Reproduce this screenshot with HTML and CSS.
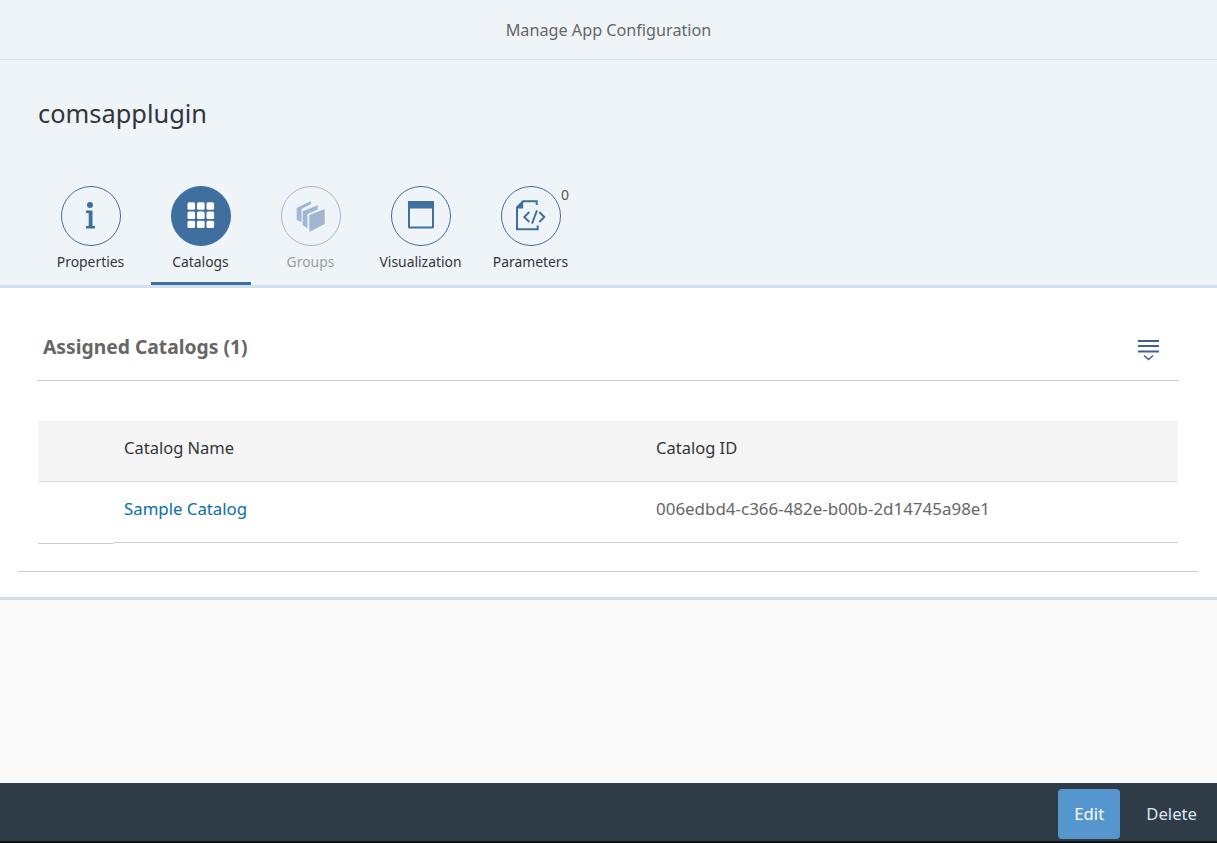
FILE: index.html
```html
<!DOCTYPE html>
<html lang="en">
<head>
<meta charset="utf-8">
<title>Manage App Configuration</title>
<link rel="stylesheet" href="styles.css">
</head>
<body>
<div class="page">
  <header class="app-header">Manage App Configuration</header>
  <section class="object-header">
    <h1 class="object-title">comsapplugin</h1>
    <nav class="tabs">
      <div class="tab">
        <span class="tab-circle">
          <svg class="icon" width="32" height="32" viewBox="0 0 32 32"><circle cx="15" cy="5" r="3" fill="#3f6f9f"/><path d="M11 10.500h6.500V26h2.500v2.500H11V26h2.700V13H11z" fill="#3f6f9f"/></svg>
        </span>
        <span class="tab-label">Properties</span>
      </div>
      <div class="tab tab-active">
        <span class="tab-circle">
          <svg class="icon" width="28" height="28" viewBox="0 0 28 28" fill="#fff"><rect x="0.5" y="0.3" width="7.6" height="7.4" rx="1.500"/><rect x="10" y="0.3" width="7.6" height="7.4" rx="1.500"/><rect x="19.500" y="0.3" width="7.6" height="7.4" rx="1.500"/><rect x="0.5" y="9.500" width="7.6" height="7.4" rx="1.500"/><rect x="10" y="9.500" width="7.6" height="7.4" rx="1.500"/><rect x="19.500" y="9.500" width="7.6" height="7.4" rx="1.500"/><rect x="0.5" y="18.700" width="7.6" height="7.4" rx="1.500"/><rect x="10" y="18.700" width="7.6" height="7.4" rx="1.500"/><rect x="19.500" y="18.700" width="7.6" height="7.4" rx="1.500"/></svg>
        </span>
        <span class="tab-label">Catalogs</span>
      </div>
      <div class="tab tab-disabled">
        <span class="tab-circle">
          <svg class="icon" width="30" height="30" viewBox="0 0 30 30" fill="#3f6f9f"><path d="M0.700 7L15 0v3L5.500 8v13l-4.800-2z"/><path d="M6.700 10.300l15-6v4.200L11.500 13v14.500L6.700 24z"/><path d="M13.300 14l15.400-6v15l-15.400 8z"/></svg>
        </span>
        <span class="tab-label">Groups</span>
      </div>
      <div class="tab">
        <span class="tab-circle">
          <svg class="icon" width="28" height="28" viewBox="0 0 28 28"><rect x="2" y="0" width="24" height="25.500" rx="0.500" fill="none" stroke="#3f6f9f" stroke-width="2"/><rect x="1" y="-1" width="26" height="7.500" fill="#3f6f9f"/></svg>
        </span>
        <span class="tab-label">Visualization</span>
      </div>
      <div class="tab">
        <span class="tab-circle">
          <svg class="icon" width="32" height="32" viewBox="0 0 32 32" fill="none" stroke="#3f6f9f" stroke-width="2"><path d="M21.700 5V1.300H8L2 7.300V29.300H22.700V25.500"/><path d="M1.500 7.500L8.200 0.500V8.500H1.500z" fill="#3f6f9f" stroke="none"/><path d="M14.300 12l-5 5 5 5M24.300 12l5 5-5 5M22 10.300l-5 13.400" stroke-width="1.900"/></svg>
        </span>
        <span class="tab-label">Parameters</span>
        <span class="tab-count">0</span>
      </div>
    </nav>
  </section>
  <section class="content">
    <div class="panel">
      <div class="toolbar">
        <h2 class="toolbar-title">Assigned Catalogs (1)</h2>
        <svg class="sort-icon" width="22" height="28" viewBox="0 0 22 28" fill="none" stroke="#3a6390"><path d="M0 9h21M0 14h21M0 19.500h21" stroke-width="2"/><path d="M6 23.500l4.500 4 4.500-4" stroke="#47627f" stroke-width="1.500"/></svg>
      </div>
      <div class="table">
        <div class="row row-head">
          <div class="cell-select"></div>
          <div class="cell-name">Catalog Name</div>
          <div class="cell-id">Catalog ID</div>
        </div>
        <div class="row row-body">
          <div class="cell-select"></div>
          <div class="cell-name"><a class="link" href="#">Sample Catalog</a></div>
          <div class="cell-id">006edbd4-c366-482e-b00b-2d14745a98e1</div>
        </div>
      </div>
    </div>
  </section>
  <div class="spacer"></div>
  <footer class="footer">
    <button class="btn btn-primary" type="button">Edit</button>
    <button class="btn" type="button">Delete</button>
  </footer>
</div>
</body>
</html>
```
FILE: styles.css
```css
* { box-sizing: border-box; }
html, body { margin: 0; height: 100%; }
body { font-family: "Noto Sans", "Open Sans", sans-serif; color: #32363a; overflow: hidden; }
.page { height: 843px; display: flex; flex-direction: column; background: #fafafa; }
.app-header {
  height: 60px; flex: none; display: flex; align-items: center; justify-content: center;
  background: #eff4f9; border-bottom: 1px solid #d5e1f7; color: #666; font-size: 16.2px;
}
.object-header { height: 228px; flex: none; background: #eff4f9; border-bottom: 3px solid #d1e0ee; display: flex; flex-direction: column; }
.object-title { margin: 0; padding: 35px 0 0 38px; height: 126px; font-size: 25.4px; font-weight: 400; line-height: 36px; color: #32363a; }
.tabs { display: flex; padding-left: 41px; gap: 10px; }
.tab { position: relative; width: 100px; height: 99px; display: flex; flex-direction: column; align-items: center; border-bottom: 3px solid transparent; }
.tab-circle { width: 60px; height: 60px; border-radius: 50%; border: 1px solid #3f6f9f; display: flex; align-items: center; justify-content: center; }
.icon { overflow: visible; }
.tab-label { margin: 6px 1px 0 0; font-size: 13.9px; line-height: 19px; color: #32363a; white-space: nowrap; }
.tab-active { border-bottom-color: #3f6f9f; }
.tab-active .tab-circle { background: #3f6f9f; }
.tab-disabled { opacity: 0.45; }
.tab-count { position: absolute; top: -1px; left: 80px; font-size: 14px; line-height: 19px; color: #555; }
.content { height: 312px; flex: none; background: #fff; border-bottom: 3px solid #d1dfea; padding: 0 19px 0 18px; }
.panel { height: 284px; padding: 0 20px; border-bottom: 1px solid #ccc; }
.toolbar { height: 93px; display: flex; align-items: center; justify-content: space-between; padding: 25px 18px 0 5px; border-bottom: 1px solid #c8c8c8; }
.toolbar-title { margin: 0; font-size: 19.3px; font-weight: 700; color: #666; }
.sort-icon { display: block; margin-top: -2px; overflow: visible; }
.table { margin-top: 40px; font-size: 16.8px; }
.row { display: flex; }
.row-head { height: 61px; background: #f5f5f5; border-bottom: 1px solid #ddd; font-size: 16.5px; }
.row-head > div { display: flex; align-items: center; padding-bottom: 8px; }
.row-body { height: 61px; color: #666; }
.row-body > div { display: flex; align-items: center; padding-bottom: 8px; border-bottom: 1px solid #ccc; }
.row-body > .cell-select { height: 62px; }
.row-body > .cell-id { font-size: 16.95px; }
.row-head > .cell-name, .row-body > .cell-name { padding-left: 10px; }
.cell-select { width: 76px; flex: none; }
.cell-name { width: 542px; flex: none; }
.cell-id { flex: 1; }
.link { color: #0a6ea8; text-decoration: none; }
.spacer { flex: 1; }
.footer { height: 60px; flex: none; background: #2f3c48; border-bottom: 2px solid #111; padding: 6px 0 0 0; display: flex; align-items: flex-start; justify-content: flex-end; gap: 6px; }
.btn { height: 50px; padding: 0 20px 2px; background: transparent; border: 0; border-radius: 4px; color: #d9e6f2; font: 400 16.7px "Noto Sans", sans-serif; }
.btn-primary { width: 62px; padding: 0 0 2px; background: #5496cd; color: #fff; }
```
